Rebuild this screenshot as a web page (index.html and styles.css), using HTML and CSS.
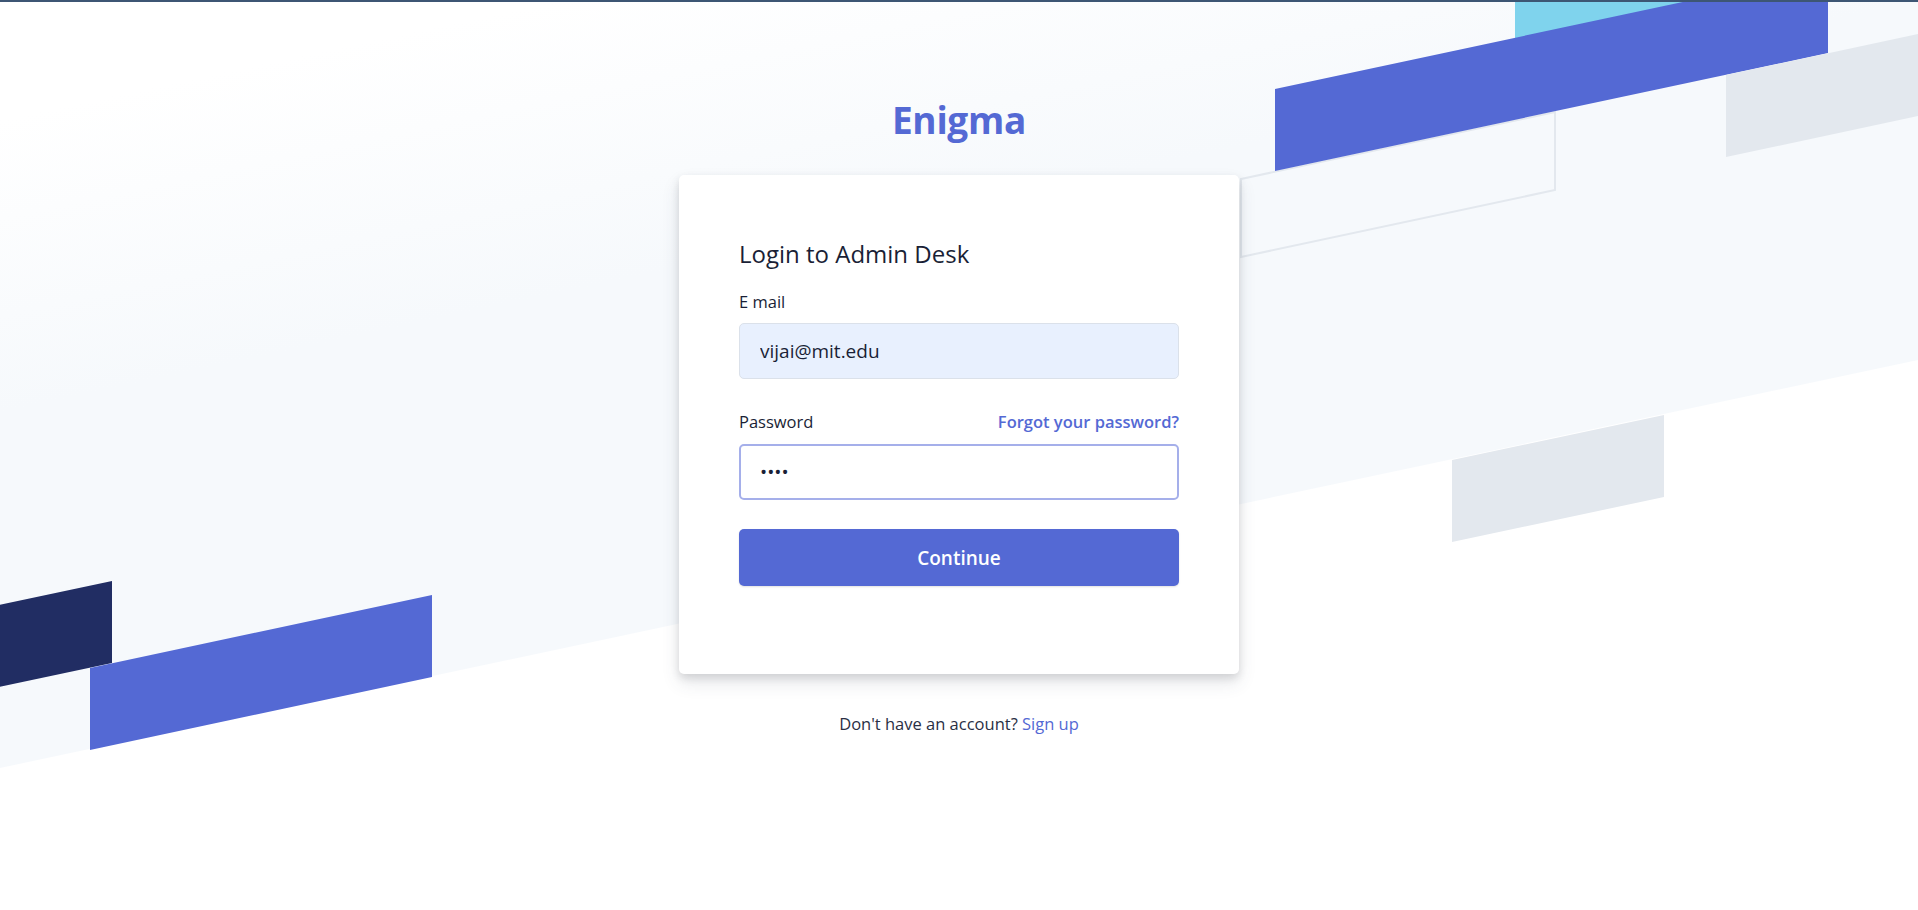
FILE: index.html
```html
<!DOCTYPE html>
<html lang="en">
<head>
<meta charset="utf-8">
<title>Enigma – Login</title>
<link rel="stylesheet" href="styles.css">
</head>
<body>
<div class="topbar"></div>
<div class="bg" aria-hidden="true">
  <svg class="bg-svg" viewBox="0 0 1918 910" width="1918" height="910" preserveAspectRatio="none">
    <defs>
      <linearGradient id="band" gradientUnits="userSpaceOnUse" x1="0" y1="120" x2="60" y2="400">
        <stop offset="0" stop-color="#ffffff"/>
        <stop offset="1" stop-color="#f6f9fc"/>
      </linearGradient>
    </defs>
    <polygon points="0,0 1918,0 1918,360 0,768" fill="url(#band)"/>
    <polygon points="-20,609 112,581 112,663 -20,691" fill="#212d63"/>
    <polygon points="90,668 432,595 432,677 90,750" fill="#5469d4"/>
    <polygon points="1452,460 1664,415 1664,497 1452,542" fill="#e3e8ee"/>
    <polygon points="1515,0 1828,0 1828,40 1515,100" fill="#7fd3ed"/>
    <polygon points="1241,179 1555,112 1555,190 1241,257" fill="none" stroke="#e3e8ee" stroke-width="2"/>
    <polygon points="1275,89 1828,-29 1828,53 1275,171" fill="#5469d4"/>
    <polygon points="1726,75 1960,25 1960,107 1726,157" fill="#e3e8ee"/>
  </svg>
</div>
<main class="page">
  <h1 class="logo">Enigma</h1>
  <section class="card">
    <h2 class="title">Login to Admin Desk</h2>
    <form class="form">
      <div class="field">
        <label class="label" for="email">E mail</label>
        <input class="input input-filled" id="email" type="email" value="vijai@mit.edu">
      </div>
      <div class="field field-pw">
        <div class="label-row">
          <label class="label" for="password">Password</label>
          <a class="forgot" href="#">Forgot your password?</a>
        </div>
        <input class="input input-focus" id="password" type="password" value="abcd">
      </div>
      <button class="btn" type="button">Continue</button>
    </form>
  </section>
  <p class="footer">Don't have an account? <a class="signup" href="#">Sign up</a></p>
</main>
</body>
</html>
```

FILE: styles.css
```css
* { box-sizing: border-box; }

html, body {
  margin: 0;
  padding: 0;
}

body {
  position: relative;
  width: 1918px;
  height: 910px;
  overflow: hidden;
  background: #ffffff;
  font-family: "Open Sans", "Noto Sans", sans-serif;
  color: #1a1f36;
}

.topbar {
  position: relative;
  z-index: 2;
  height: 2px;
  background: #3d5674;
}

.bg {
  position: absolute;
  inset: 0;
  z-index: 0;
}

.bg-svg {
  display: block;
  width: 1918px;
  height: 910px;
}

.page {
  position: relative;
  z-index: 1;
  display: flex;
  flex-direction: column;
  align-items: center;
  padding-top: 96px;
}

.logo {
  margin: 0;
  font-size: 37px;
  line-height: 44px;
  font-weight: 700;
  color: #5469d4;
  letter-spacing: -0.3px;
}

.card {
  margin-top: 33px;
  width: 560px;
  padding: 61px 60px 88px;
  background: #ffffff;
  border-radius: 5px;
  box-shadow: 0 9px 18px rgba(60, 66, 87, 0.12), 0 4px 8px rgba(0, 0, 0, 0.12);
}

.title {
  margin: 0 0 18px;
  font-size: 24px;
  line-height: 35px;
  font-weight: 400;
  color: #1a1f36;
}

.form {
  display: flex;
  flex-direction: column;
}

.field {
  display: flex;
  flex-direction: column;
}

.field-pw {
  margin-top: 30px;
}

.label-row {
  display: flex;
  justify-content: space-between;
  align-items: baseline;
}

.label {
  display: block;
  margin-bottom: 10px;
  font-size: 16.5px;
  line-height: 25px;
  font-weight: 500;
  color: #1a1f36;
}

.field:first-child .label {
  margin-bottom: 9px;
}

.forgot {
  font-size: 16.5px;
  line-height: 25px;
  font-weight: 600;
  color: #5469d4;
  text-decoration: none;
}

.input {
  height: 56px;
  width: 100%;
  padding: 0 20px;
  font-family: inherit;
  font-size: 19px;
  color: #1a1f36;
  border-radius: 5px;
  outline: none;
}

.input-filled {
  background: #e8f0fe;
  border: 1px solid #dbe1ea;
}

.input-focus {
  background: #ffffff;
  border: 2px solid #a5afea;
  padding-left: 19px;
}

.btn {
  margin-top: 29px;
  height: 57px;
  width: 100%;
  border: 0;
  border-radius: 5px;
  background: #5469d4;
  color: #ffffff;
  font-family: inherit;
  font-size: 19px;
  font-weight: 600;
  box-shadow: 0 1px 2px rgba(0, 0, 0, 0.12);
  cursor: pointer;
}

.footer {
  margin: 37px 0 0;
  font-size: 16.5px;
  line-height: 25px;
  color: #2a2f45;
}

.signup {
  color: #5469d4;
  text-decoration: none;
}
```
